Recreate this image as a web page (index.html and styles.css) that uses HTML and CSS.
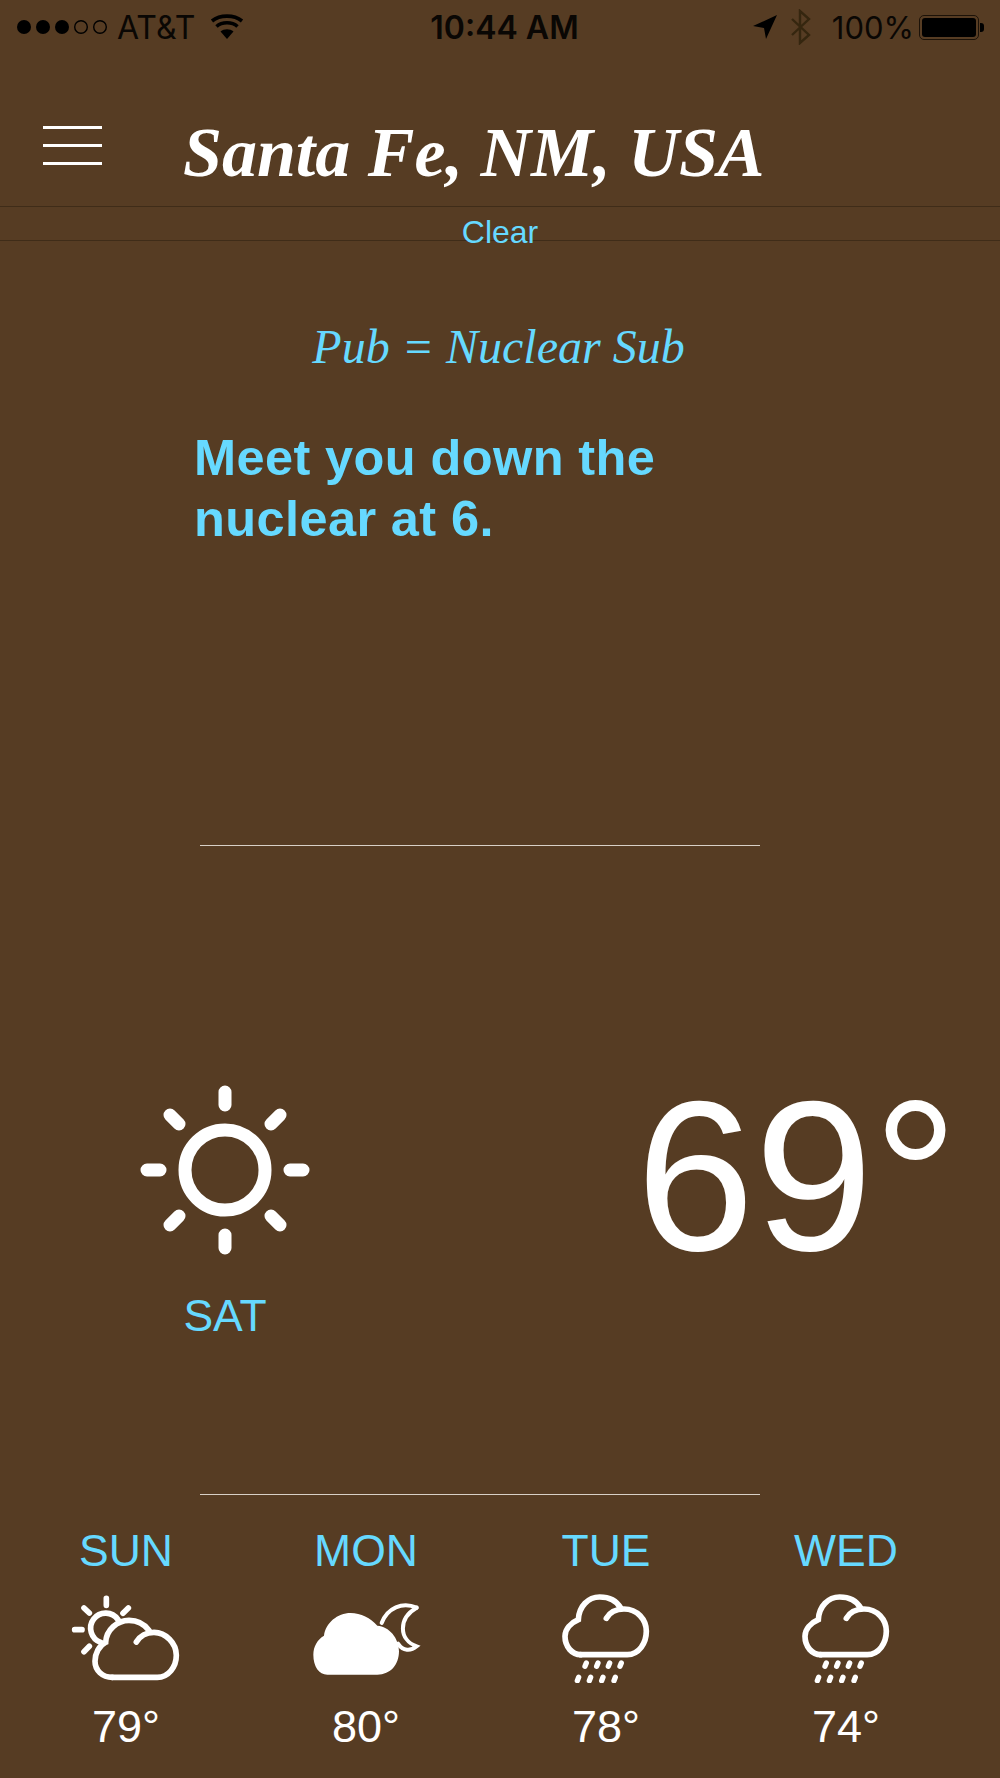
FILE: index.html
```html
<!DOCTYPE html>
<html lang="en">
<head>
    <meta charset="UTF-8">
    <meta name="viewport" content="width=device-width, initial-scale=1.0">
    <title>Santa Fe, NM, USA</title>
    <link rel="stylesheet" href="styles.css">
</head>
<body>
    <div class="status-bar">
        <div class="status-left">
            <svg class="signal" width="96" height="18" viewBox="0 0 96 18">
                <circle cx="8" cy="9" r="7"/>
                <circle cx="27" cy="9" r="7"/>
                <circle cx="46" cy="9" r="7"/>
                <circle class="signal-off" cx="65" cy="9" r="6.3"/>
                <circle class="signal-off" cx="84" cy="9" r="6.3"/>
            </svg>
            <span class="carrier">AT&amp;T</span>
            <svg class="wifi" width="34" height="26" viewBox="0 0 34 26">
                <path d="M17 25 L10.5 17.5 C14 14.5 20 14.5 23.5 17.5 Z"/>
                <path class="wifi-arc" d="M6.5 12.5 C12 7.5 22 7.5 27.5 12.5"/>
                <path class="wifi-arc" d="M2 7 C10 0.5 24 0.5 32 7"/>
            </svg>
        </div>
        <div class="status-time">10:44 AM</div>
        <div class="status-right">
            <svg class="arrow" width="24" height="24" viewBox="0 0 24 24"><path d="M0 11 L24 0 L13 24 L11 13 Z"/></svg>
            <svg class="bluetooth" width="20" height="36" viewBox="0 0 20 36"><path d="M1 10 L18 26 L9 34 V2 L18 10 L1 26"/></svg>
            <span class="battery-text">100%</span>
            <div class="battery"><div class="battery-fill"></div></div>
            <div class="battery-tip"></div>
        </div>
    </div>

    <div class="header">
        <div class="menu-btn"><span></span><span></span><span></span></div>
        <h1 class="city">Santa Fe, NM, USA</h1>
    </div>
    <div class="condition">Clear</div>

    <div class="note">
        <h2 class="note-title">Pub = Nuclear Sub</h2>
        <p class="note-text">Meet you down the<br>nuclear at 6.</p>
    </div>

    <div class="rule"></div>

    <div class="today">
        <div class="today-day">
            <svg width="180" height="180" viewBox="-90 -90 180 180">
                <g class="sun">
                    <circle r="40"/>
                    <path d="M0 -78 V-65 M0 78 V65 M-78 0 H-65 M78 0 H65 M-55 -55 L-46 -46 M55 -55 L46 -46 M-55 55 L-46 46 M55 55 L46 46"/>
                </g>
            </svg>
            <div class="today-label">SAT</div>
        </div>
        <div class="today-temp">69°</div>
    </div>

    <div class="rule"></div>

    <div class="forecast">
        <div class="day">
            <div class="day-label">SUN</div>
            <svg class="day-icon" viewBox="60 250 340 270">
                <g class="icon-line">
                    <path d="M190 503 H325 C358 503 382 472 382 437 C382 400 350 368 315 368 C292 368 272 380 262 397"/>
                    <path d="M300 362 C285 342 265 332 240 332 C205 332 172 360 170 398 C150 408 138 432 138 455 C138 482 160 503 190 503"/>
                    <path d="M207 330 A45 45 0 1 0 155 398"/>
                    <path d="M172 266 V287 M105 295 L121 310 M238 295 L222 311 M77 360 H99 M105 426 L121 410"/>
                </g>
            </svg>
            <div class="day-temp">79°</div>
        </div>
        <div class="day">
            <div class="day-label">MON</div>
            <svg class="day-icon" viewBox="780 250 340 270">
                <path class="icon-fill" d="M835 495 H985 C1025 495 1050 465 1050 425 C1050 385 1020 350 985 348 C965 325 935 310 905 310 C865 310 830 340 825 378 C805 390 793 410 793 435 C793 470 810 495 835 495 Z"/>
                <g class="icon-line moon">
                    <path d="M1103 294 C1060 275 1015 295 998 340"/>
                    <path d="M1047 402 C1062 425 1085 425 1103 410 C1048 390 1048 325 1103 294"/>
                </g>
            </svg>
            <div class="day-temp">80°</div>
        </div>
        <div class="day">
            <div class="day-label">TUE</div>
            <svg class="day-icon" viewBox="60 250 340 270">
                <g class="icon-line">
                    <path d="M155 435 H295 C330 435 352 400 352 365 C352 330 325 298 285 298 C262 298 242 308 232 326"/>
                    <path d="M275 295 C262 272 240 262 212 262 C178 262 150 290 148 330 C125 340 108 358 108 380 C108 412 130 435 155 435"/>
                </g>
                <path class="drops" d="M172 460 L168 470 M207 460 L203 470 M242 460 L238 470 M277 460 L273 470 M149 503 L145 513 M185 503 L181 513 M222 503 L218 513 M259 503 L255 513"/>
            </svg>
            <div class="day-temp">78°</div>
        </div>
        <div class="day">
            <div class="day-label">WED</div>
            <svg class="day-icon" viewBox="60 250 340 270">
                <g class="icon-line">
                    <path d="M155 435 H295 C330 435 352 400 352 365 C352 330 325 298 285 298 C262 298 242 308 232 326"/>
                    <path d="M275 295 C262 272 240 262 212 262 C178 262 150 290 148 330 C125 340 108 358 108 380 C108 412 130 435 155 435"/>
                </g>
                <path class="drops" d="M172 460 L168 470 M207 460 L203 470 M242 460 L238 470 M277 460 L273 470 M149 503 L145 513 M185 503 L181 513 M222 503 L218 513 M259 503 L255 513"/>
            </svg>
            <div class="day-temp">74°</div>
        </div>
    </div>
</body>
</html>
```

FILE: styles.css
```css
body {
    margin: 0;
    width: 1000px;
    height: 1778px;
    overflow: hidden;
    background: #563c23;
    font-family: "Liberation Sans", Arial, sans-serif;
    color: #fff;
}

/* status bar */
.status-bar {
    display: flex;
    justify-content: space-between;
    align-items: center;
    height: 54px;
    padding: 0 16px 0 16px;
    font-family: Inter, "Liberation Sans", sans-serif;
    font-size: 31px;
    color: #0a0704;
}

.status-left,
.status-right {
    display: flex;
    align-items: center;
    width: 340px;
}

.status-right {
    justify-content: flex-end;
}

.signal {
    fill: #000;
    margin-right: 5px;
}

.signal .signal-off {
    fill: none;
    stroke: #000;
    stroke-width: 1.4;
}

.carrier {
    font-size: 32px;
}

.wifi {
    margin-left: 15px;
    fill: #000;
}

.wifi .wifi-arc {
    fill: none;
    stroke: #000;
    stroke-width: 3.6;
}

.status-time {
    margin-left: 9px;
    font-weight: 600;
    font-size: 32px;
}

.arrow {
    fill: #000;
    margin-right: 14px;
}

.bluetooth {
    fill: none;
    stroke: #35260f;
    stroke-width: 2.4;
    margin-right: 21px;
}

.battery-text {
    margin-right: 5px;
}

.battery {
    box-sizing: border-box;
    width: 60px;
    height: 25px;
    padding: 2px;
    border: 1px solid #1c1208;
    border-radius: 5px;
}

.battery-fill {
    height: 100%;
    background: #000;
    border-radius: 3px;
}

.battery-tip {
    width: 4px;
    height: 9px;
    margin-left: 1px;
    background: #000;
    border-radius: 0 3px 3px 0;
}

/* header */
.header {
    display: flex;
    align-items: center;
    height: 153px;
    box-sizing: border-box;
    border-bottom: 1px solid #3f2c18;
    padding: 32px 0 0 43px;
}

.menu-btn {
    display: flex;
    flex-direction: column;
    gap: 15.5px;
    width: 59px;
    margin-top: -1px;
}

.menu-btn span {
    display: block;
    height: 2.5px;
    background: #fff;
}

.city {
    margin: 14px 0 0 81px;
    font-family: "Liberation Serif", serif;
    font-style: italic;
    font-weight: bold;
    font-size: 70px;
    line-height: 90px;
    white-space: nowrap;
}

.condition {
    height: 34px;
    box-sizing: border-box;
    border-bottom: 1px solid #3f2c18;
    text-align: center;
    font-size: 32px;
    line-height: 50px;
    color: #66d9ff;
}

/* note */
.note {
    height: 604px;
    box-sizing: border-box;
    padding-top: 74px;
    color: #66d9ff;
}

.note-title {
    margin: 0;
    padding-right: 3px;
    text-align: center;
    font-family: "Liberation Serif", serif;
    font-style: italic;
    font-weight: normal;
    font-size: 48px;
    line-height: 64px;
}

.note-text {
    margin: 48px 0 0 194px;
    font-weight: bold;
    font-size: 50.5px;
    letter-spacing: 0.4px;
    line-height: 61px;
}

.rule {
    height: 1px;
    margin: 0 240px 0 200px;
    background: #d8d0c6;
}

/* today */
.today {
    display: flex;
    height: 648px;
    box-sizing: border-box;
    padding-top: 234px;
}

.today-day {
    width: 450px;
    text-align: center;
}

.today-day svg {
    display: block;
    margin: 0 auto;
}

.sun {
    fill: none;
    stroke: #fff;
    stroke-width: 13;
    stroke-linecap: round;
}

.today-label {
    margin-top: 32px;
    font-size: 44.5px;
    line-height: 48px;
    color: #66d9ff;
}

.today-temp {
    margin-left: 186px;
    font-size: 213px;
    line-height: 240px;
    margin-top: -24px;
}

/* forecast */
.forecast {
    display: grid;
    grid-template-columns: repeat(4, 240px);
    padding: 31px 0 0 6px;
}

.day {
    text-align: center;
}

.day-label {
    font-size: 44.5px;
    line-height: 50px;
    color: #66d9ff;
}

.day-icon {
    display: block;
    width: 113.33px;
    height: 90px;
    margin: 17px auto 0;
}

.icon-line {
    fill: none;
    stroke: #fff;
    stroke-width: 17;
    stroke-linecap: round;
}

.icon-line.moon {
    stroke-width: 12;
}

.icon-fill {
    fill: #fff;
}

.drops {
    fill: none;
    stroke: #fff;
    stroke-width: 16;
    stroke-linecap: round;
}

.day-temp {
    margin-top: 19px;
    font-size: 45px;
    line-height: 50px;
}
```
